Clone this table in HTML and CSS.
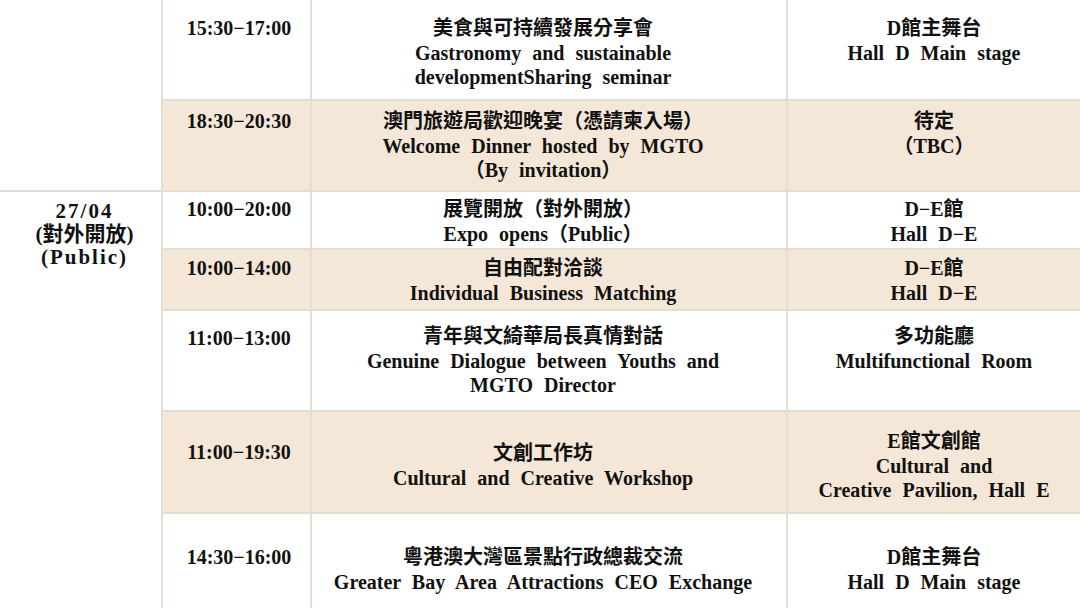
FILE: index.html
```html
<!DOCTYPE html>
<html lang="zh-Hant">
<head>
<meta charset="utf-8">
<title>Schedule</title>
<link rel="stylesheet" href="styles.css">
</head>
<body>
<table class="schedule">
  <colgroup>
    <col class="c-date">
    <col class="c-time">
    <col class="c-event">
    <col class="c-place">
  </colgroup>
  <tbody>
    <tr class="r1">
      <td class="date" rowspan="2"></td>
      <td class="time pt16">15:30−17:00</td>
      <td class="event pt16">美食與可持續發展分享會<br>Gastronomy and sustainable<br>developmentSharing seminar</td>
      <td class="place pt16">D館主舞台<br>Hall D Main stage</td>
    </tr>
    <tr class="r2 alt">
      <td class="time pt8">18:30−20:30</td>
      <td class="event pt8">澳門旅遊局歡迎晚宴（憑請柬入場）<br>Welcome Dinner hosted by MGTO<br>（By invitation）</td>
      <td class="place pt8">待定<br>（TBC）</td>
    </tr>
    <tr class="r3">
      <td class="date day" rowspan="5"><span class="d-num">27/04</span><br><span class="d-cjk">(對外開放)</span><br><span class="d-num">(Public)</span></td>
      <td class="time pt5">10:00−20:00</td>
      <td class="event pt5">展覽開放（對外開放）<br>Expo opens（Public）</td>
      <td class="place pt5">D−E館<br>Hall D−E</td>
    </tr>
    <tr class="r4 alt">
      <td class="time pt6">10:00−14:00</td>
      <td class="event pt6">自由配對洽談<br>Individual Business Matching</td>
      <td class="place pt6">D−E館<br>Hall D−E</td>
    </tr>
    <tr class="r5">
      <td class="time pt15">11:00−13:00</td>
      <td class="event pt13">青年與文綺華局長真情對話<br>Genuine Dialogue between Youths and<br>MGTO Director</td>
      <td class="place pt13">多功能廳<br>Multifunctional Room</td>
    </tr>
    <tr class="r6 alt">
      <td class="time pt28">11:00−19:30</td>
      <td class="event pt29">文創工作坊<br>Cultural and Creative Workshop</td>
      <td class="place pt17">E館文創館<br>Cultural and<br>Creative Pavilion, Hall E</td>
    </tr>
    <tr class="r7">
      <td class="time pt31">14:30−16:00</td>
      <td class="event pt31">粵港澳大灣區景點行政總裁交流<br>Greater Bay Area Attractions CEO Exchange</td>
      <td class="place pt31">D館主舞台<br>Hall D Main stage</td>
    </tr>
  </tbody>
</table>
</body>
</html>
```

FILE: styles.css
```css
html, body {
  margin: 0;
  padding: 0;
  background: #ffffff;
  overflow: hidden;
}

body {
  width: 1080px;
  height: 608px;
  font-family: "Liberation Serif", "Noto Sans CJK TC", serif;
  font-weight: bold;
  color: #111111;
}

.schedule {
  width: 1080px;
  table-layout: fixed;
  border-collapse: collapse;
  font-size: 20px;
  line-height: 24.5px;
  word-spacing: 6px;
}

.c-date { width: 162px; }
.c-time { width: 149px; }
.c-event { width: 476px; }
.c-place { width: 293px; }

.schedule td {
  border: 2px solid #e4ddd2;
  padding: 0;
  text-align: center;
  vertical-align: top;
  white-space: nowrap;
}

.r1 td { border-top: none; }
.schedule td.date { border-left: none; }
.schedule td.place { border-right: none; }
.r7 td { border-bottom: none; }

.alt td.time,
.alt td.event,
.alt td.place {
  background: #f4e7d7;
}

.r1 { height: 100px; }
.r2 { height: 91px; }
.r3 { height: 58px; }
.r4 { height: 61px; }
.r5 { height: 101px; }
.r6 { height: 102px; }
.r7 { height: 100px; }

.time { padding-left: 5px !important; }
.event { padding-right: 12px !important; }

.day {
  padding-top: 8px !important;
  padding-left: 8px !important;
  line-height: 23px;
  font-size: 21px;
  word-spacing: 0;
}
.d-num { letter-spacing: 2px; }
.d-cjk { letter-spacing: 0; }

.pt5 { padding-top: 5px !important; }
.pt6 { padding-top: 6px !important; }
.pt8 { padding-top: 8px !important; }
.pt13 { padding-top: 13px !important; }
.pt15 { padding-top: 15px !important; }
.pt16 { padding-top: 16px !important; }
.pt17 { padding-top: 17px !important; }
.pt28 { padding-top: 28px !important; }
.pt29 { padding-top: 29px !important; }
.pt31 { padding-top: 31px !important; }
```
